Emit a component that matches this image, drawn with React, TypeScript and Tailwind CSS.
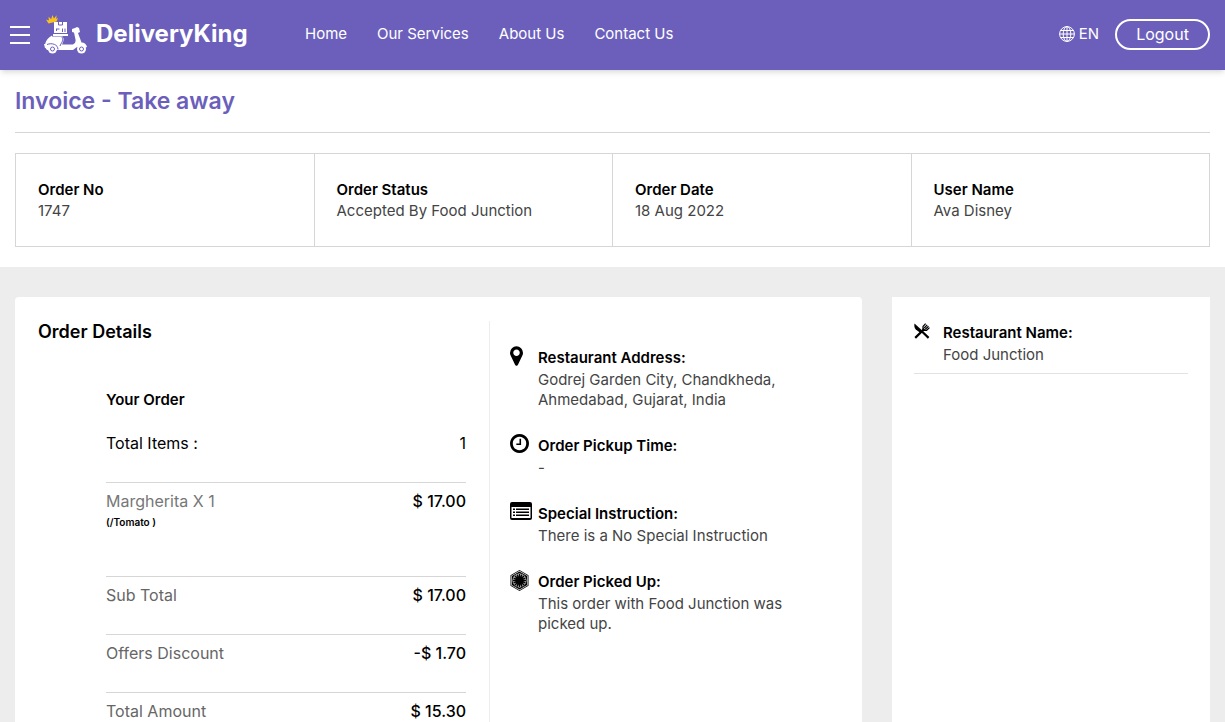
import React from "react";
import { FaFirstOrder } from "react-icons/fa";

const rule = "border-[#d6d6d6]";

function Scooter() {
  return (
    <svg viewBox="0 0 44 40" className="h-10 w-11 shrink-0" aria-hidden="true">
      <path fill="#fbc21c" d="M4.500 9.500 2 5.600 4.800 6.600 4.600 2.800 7.200 5.200 8.400 1 10 4.400 12.600 1.200 12.200 5 14 3.800 12.600 7.600z" />
      <g fill="#fff">
        <path d="M10 8h13v11H10z" />
        <path d="M9 20h15v2H9z" />
        <path d="M8 22.500h10.500c2 2.500 1 5-.5 8h10c2.500 0 4-2.500 3.500-5L30 18.500l-2-.5v-3l3-1 2-1 2 1 1 4-2 1 3.500 9.500c3 0 5 2 5.500 4.500l-3 1-7-1-4 3H3c-3-3-3-10 5-14.500z" />
        <path d="M0 30h5v4H1z" />
        <circle cx="8.500" cy="35" r="4.500" />
        <circle cx="37.500" cy="35" r="4.500" />
      </g>
      <g fill="none" stroke="#6c5fbc" strokeWidth="1">
        <path d="M14.500 8v3h4V8M12 15h3.500M12.500 17v-2M18.500 18v-3.500m2.500 3.500v-3.500M3 30.500c5-2 11 0 11 5M18 23c2 4-1 6-2 9" />
        <circle cx="8.500" cy="35" r="2" />
        <circle cx="37.500" cy="35" r="2" />
      </g>
    </svg>
  );
}

function Globe() {
  return (
    <svg viewBox="0 0 16 16" className="size-4" fill="none" stroke="currentColor" strokeWidth="1" aria-hidden="true">
      <circle cx="8" cy="8" r="7.400" />
      <ellipse cx="8" cy="8" rx="3.800" ry="7.400" />
      <path d="M8 .5v15M.5 8h15M1.500 4.500h13M1.500 11.500h13" />
    </svg>
  );
}

const Pin = () => (
  <svg viewBox="0 128 1024 1536" className="h-5 w-[13px]" fill="currentColor" aria-hidden="true">
    <path d="M768 640q0-106-75-181t-181-75-181 75-75 181 75 181 181 75 181-75 75-181zm256 0q0 109-33 179l-364 774q-16 33-47.500 52t-67.500 19-67.500-19-46.500-52l-365-774q-33-70-33-179 0-212 150-362t362-150 362 150 150 362z" />
  </svg>
);

const Clock = () => (
  <svg viewBox="128 128 1536 1536" className="size-[19px]" fill="currentColor" aria-hidden="true">
    <path d="M1024 544v448q0 14-9 23t-23 9h-320q-14 0-23-9t-9-23v-64q0-14 9-23t23-9h224v-352q0-14 9-23t23-9h64q14 0 23 9t9 23zm416 352q0-148-73-273t-198-198-273-73-273 73-198 198-73 273 73 273 198 198 273 73 273-73 198-198 73-273zm224 0q0 209-103 385.500t-279.500 279.500-385.500 103-385.500-103-279.500-279.500-103-385.500 103-385.500 279.500-279.500 385.500-103 385.500 103 279.500 279.500 103 385.500z" />
  </svg>
);

const ListIcon = () => (
  <svg viewBox="0 0 22 18" className="h-[18px] w-[22px]" aria-hidden="true">
    <path fillRule="evenodd" d="M2 0h18a2 2 0 0 1 2 2v14a2 2 0 0 1-2 2H2a2 2 0 0 1-2-2V2a2 2 0 0 1 2-2zM1.500 5v11h19V5z" />
    <path d="M3 6.500h2v1.500H3zM6 6.500h13v1.500H6zM3 9.500h2V11H3zM6 9.500h13V11H6zM3 12.500h2V14H3zM6 12.500h13V14H6z" />
  </svg>
);

const Cutlery = () => (
  <svg viewBox="0 0 16 16" className="size-4" fill="none" stroke="currentColor" aria-hidden="true">
    <path fill="currentColor" stroke="none" d="M.5.5 9 8.200 6.800 10.300 1.800 6.500C.3 5 .1 2.500.5.500z" />
    <path strokeWidth="2.200" d="m8 8.500 6.600 6.400M1.200 14.900 10 6.300" />
    <path strokeWidth="1.200" d="M11.600.6 9 3.500v2.800l1 1h2.600l2.900-2.700M13.200 1.800l-3 3.200M14.500 3.200l-3.200 3" />
    <path fill="currentColor" stroke="none" d="m9 4.600 3 2.900H9.300L8.700 7z" />
  </svg>
);

const summary = [
  ["Order No", "1747"],
  ["Order Status", "Accepted By Food Junction"],
  ["Order Date", "18 Aug 2022"],
  ["User Name", "Ava Disney"],
];

const totals = [
  ["Sub Total", "$ 17.00"],
  ["Offers Discount", "-$ 1.70"],
  ["Total Amount", "$ 15.30"],
];

const details = [
  { icon: <Pin />, title: "Restaurant Address:", text: "Godrej Garden City, Chandkheda, Ahmedabad, Gujarat, India" },
  { icon: <Clock />, title: "Order Pickup Time:", text: "-" },
  { icon: <ListIcon />, title: "Special Instruction:", text: "There is a No Special Instruction" },
  { icon: <FaFirstOrder className="-ml-px size-[21px]" />, title: "Order Picked Up:", text: "This order with Food Junction was picked up." },
];

export default function App() {
  return (
    <div className="h-screen overflow-hidden bg-[#ededed] font-['Inter','Noto_Sans',sans-serif] text-[15px] text-black">
      <header className="relative flex h-[70px] items-center bg-[#6c5fbc] pr-[15px] pb-0.5 pl-2.5 text-white shadow-md">
        <button aria-label="Menu" className="flex w-5 flex-col gap-1.5 pt-0.5">
          <span className="h-0.5 bg-white" />
          <span className="h-0.5 bg-white" />
          <span className="h-0.5 bg-white" />
        </button>
        <a href="#home" className="ml-3.5 flex w-[204px] items-center gap-2">
          <Scooter />
          <span className="text-2xl font-bold">DeliveryKing</span>
        </a>
        <nav className="ml-[57px] flex gap-[30px]">
          <a href="#home">Home</a>
          <a href="#services">Our Services</a>
          <a href="#about">About Us</a>
          <a href="#contact">Contact Us</a>
        </nav>
        <div className="ml-auto flex items-center gap-4">
          <button className="flex items-center gap-1"><Globe />EN</button>
          <button className="h-[31px] w-[95px] rounded-full border-2 border-white text-base">Logout</button>
        </div>
      </header>

      <section className="bg-white px-[15px] pb-5">
        <h1 className={`border-b ${rule} pt-[15px] pb-[15px] text-[23px] leading-8 font-semibold text-[#6c5fbc]`}>Invoice - Take away</h1>
        <dl className={`mt-5 grid grid-cols-4 border-y border-r ${rule}`}>
          {summary.map(([label, value]) => (
            <div key={label} className={`border-l ${rule} px-[22px] py-[25px] leading-[21px]`}>
              <dt className="font-semibold">{label}</dt>
              <dd className="text-[#444]">{value}</dd>
            </div>
          ))}
        </dl>
      </section>

      <main className="flex gap-[30px] px-[15px] pt-[30px]">
        <section className="flex h-[600px] flex-1 rounded bg-white pt-6">
          <div className="w-[475px] shrink-0 border-r border-[#ededed] px-[23px]">
            <h2 className="text-lg leading-[22px] font-semibold">Order Details</h2>
            <div className="mt-[46px] ml-[68px]">
              <h3 className="leading-[22px] font-semibold">Your Order</h3>
              <div className="flex justify-between pt-5 pb-[27px] text-base leading-6">
                <span>Total Items :</span><span>1</span>
              </div>
              <div className={`flex h-[94px] justify-between border-t ${rule} pt-1.5 text-base leading-6`}>
                <div>
                  <p className="text-[#777]">Margherita X 1</p>
                  <p className="text-[10px] leading-[18px] font-semibold">(/Tomato )</p>
                </div>
                <span className="font-medium">$ 17.00</span>
              </div>
              {totals.map(([label, value]) => (
                <div key={label} className={`flex h-[58px] justify-between border-t ${rule} pt-1.5 text-base leading-6`}>
                  <span className="text-[#666]">{label}</span>
                  <span className="font-medium">{value}</span>
                </div>
              ))}
            </div>
          </div>
          <ul className="flex flex-1 flex-col gap-6 px-5 pt-[25px]">
            {details.map((d) => (
              <li key={d.title} className="flex">
                <span className="w-7 shrink-0">{d.icon}</span>
                <div className="max-w-[270px]">
                  <h3 className="leading-6 font-semibold">{d.title}</h3>
                  <p className="leading-5 text-[#444]">{d.text}</p>
                </div>
              </li>
            ))}
          </ul>
        </section>
        <aside className="w-[318px] shrink-0 bg-white px-[22px] pt-6">
          <div className="flex border-b border-[#e2e2e2] pb-2">
            <span className="w-[29px] shrink-0 pt-0.5"><Cutlery /></span>
            <div>
              <h3 className="leading-6 font-semibold">Restaurant Name:</h3>
              <p className="leading-5 text-[#444]">Food Junction</p>
            </div>
          </div>
        </aside>
      </main>
    </div>
  );
}
